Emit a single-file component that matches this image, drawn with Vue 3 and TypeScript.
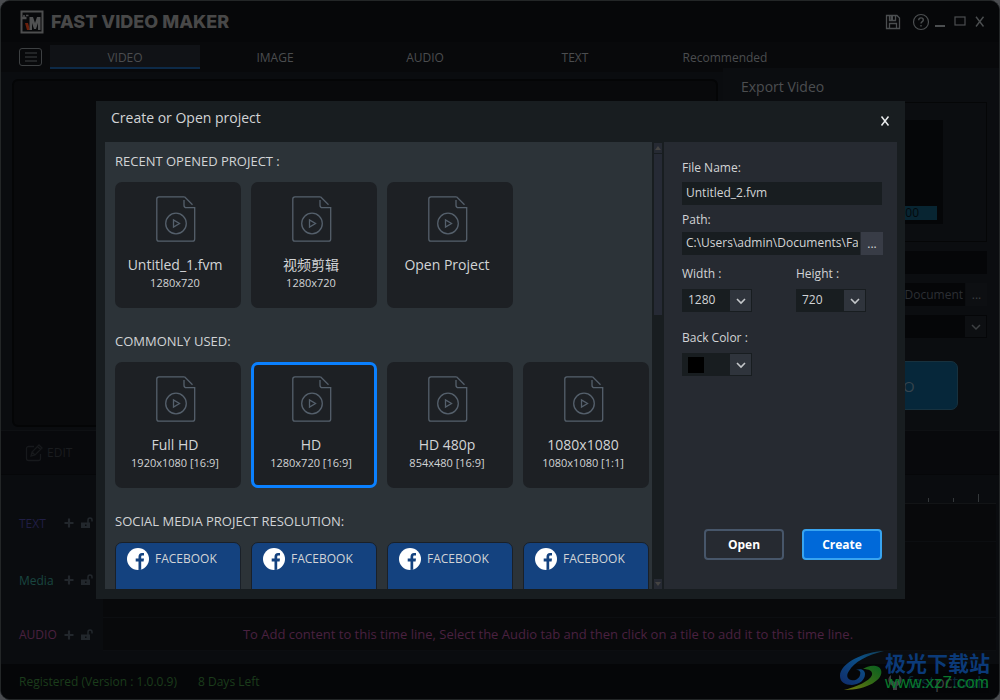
<script setup lang="ts">
import { ref } from 'vue'

interface Project {
  title: string
  size?: string
}

const tabs = ['VIDEO', 'IMAGE', 'AUDIO', 'TEXT', 'Recommended']
const activeTab = ref('VIDEO')

const recent: Project[] = [
  { title: 'Untitled_1.fvm', size: '1280x720' },
  { title: '视频剪辑', size: '1280x720' },
  { title: 'Open Project' },
]
const common: Project[] = [
  { title: 'Full HD', size: '1920x1080 [16:9]' },
  { title: 'HD', size: '1280x720 [16:9]' },
  { title: 'HD 480p', size: '854x480 [16:9]' },
  { title: '1080x1080', size: '1080x1080 [1:1]' },
]
const sections = [
  { heading: 'RECENT OPENED PROJECT :', items: recent },
  { heading: 'COMMONLY USED:', items: common },
]
const selected = ref('HD')
const social = ['FACEBOOK', 'FACEBOOK', 'FACEBOOK', 'FACEBOOK']

const tracks = [
  { name: 'TEXT', kind: 'text', hint: '' },
  { name: 'Media', kind: 'media', hint: '' },
  {
    name: 'AUDIO',
    kind: 'audio',
    hint: 'To Add content to this time line, Select the Audio tab and then click on a tile to add it to this time line.',
  },
]
const ticks = [false, false, true]

const fileName = ref('Untitled_2.fvm')
const path = ref('C:\\Users\\admin\\Documents\\FastVideoMaker')
const width = ref('1280')
const height = ref('720')
</script>

<template>
  <div class="window">
    <header class="titlebar">
      <svg class="logo" viewBox="0 0 24 24" width="24" height="24">
        <rect x="1.5" y="1.5" width="21" height="21" fill="#08090b" stroke="#4d4e4f" stroke-width="2" />
        <path d="M2 8h4.500" stroke="#4d4e4f" stroke-width="2.500" />
        <path d="M6 5.500h2.500M4 7v-2" stroke="#4d4e4f" stroke-width="1.500" fill="none" />
        <path d="M5 13h3l2 7H7z" fill="#6a200c" />
        <path d="M9.500 20V7H13l2 6 2-6h3.500v13H18v-7l-2 6h-2l-2-6v7z" fill="#505152" />
      </svg>
      <h1>FAST VIDEO MAKER</h1>
      <div class="window-tools">
        <button class="bare" aria-label="Save">
          <svg viewBox="0 0 16 16" width="16" height="16" fill="none" stroke="#4b4e50" stroke-width="1.300">
            <path d="M1.500 1.500h10.500l2.500 2.500v10.500h-13z" />
            <path d="M4.500 14.500v-5h7v5" />
            <path d="M4.500 1.500v5h6v-5" />
            <path d="M5.500 2h2.500v4H5.500z" fill="#4b4e50" stroke="none" />
          </svg>
        </button>
        <button class="bare" aria-label="Help">
          <svg viewBox="0 0 18 18" width="18" height="18" fill="none" stroke="#4b4e50" stroke-width="1.200">
            <circle cx="9" cy="9" r="7.500" />
            <path d="M6.700 7.200c0-1.500 1-2.300 2.300-2.300s2.300.8 2.300 2c0 1.700-2.300 1.800-2.300 3.700M9 12v1.600" stroke-width="1.400" />
          </svg>
        </button>
        <button class="bare" aria-label="Minimize">
          <svg viewBox="0 0 12 12" width="12" height="12"><path d="M1 10h10" stroke="#4b4e50" stroke-width="2" /></svg>
        </button>
        <button class="bare" aria-label="Maximize">
          <svg viewBox="0 0 12 12" width="12" height="12"><rect x="1" y="1" width="10" height="8" fill="none" stroke="#4b4e50" stroke-width="1.200" /></svg>
        </button>
        <button class="bare" aria-label="Close">
          <svg viewBox="0 0 12 12" width="12" height="12"><path d="M2 .8l7.500 9.700M9.500 .8L2 10.500" stroke="#4b4e50" stroke-width="1.400" /></svg>
        </button>
      </div>
    </header>

    <nav class="tabs">
      <button class="menu" aria-label="Menu">
        <svg viewBox="0 0 12 10" width="12" height="10"><path d="M0 1h12M0 5h12M0 9h12" stroke="#3d4042" stroke-width="1" /></svg>
      </button>
      <button
        v-for="tab in tabs"
        :key="tab"
        class="tab"
        :class="{ active: tab === activeTab }"
        @click="activeTab = tab"
      >
        {{ tab }}
      </button>
    </nav>

    <main class="workspace">
      <div class="preview"></div>
      <section class="export">
        <h2>Export Video</h2>
        <div class="export-preview">
          <div class="screen"><span class="timer">00:00:00</span></div>
        </div>
        <input class="dark-input" type="text" aria-label="Export name" />
        <div class="export-path">
          <input class="dark-input path-end" type="text" aria-label="Export folder" value="C:\Users\admin\Document" />
          <button class="dim-more" aria-label="Browse export folder">...</button>
        </div>
        <div class="export-format">
          <select aria-label="Export format"><option></option></select>
          <span class="dim-arrow">
            <svg viewBox="0 0 12 8" width="12" height="8"><path d="M2 2l4 4 4-4" fill="none" stroke="#3d4043" stroke-width="1.500" /></svg>
          </span>
        </div>
        <button class="export-button">EXPORT VIDEO</button>
      </section>
    </main>

    <div class="edit-bar">
      <button class="bare edit">
        <svg viewBox="0 0 18 18" width="18" height="18" fill="none" stroke="#17191c" stroke-width="1.300">
          <path d="M9 2.500H3.500a2 2 0 0 0-2 2v10a2 2 0 0 0 2 2h10a2 2 0 0 0 2-2V10" />
          <path d="M6 12l1-4 7-7 3 3-7 7zM12.500 2.500l3 3M7 8l3 3" />
        </svg>
        EDIT
      </button>
    </div>

    <section class="timeline">
      <div class="ruler">
        <span v-for="(long, i) in ticks" :key="i" class="tick" :class="{ long }"></span>
      </div>
      <div v-for="track in tracks" :key="track.kind" class="track" :class="track.kind">
        <span class="track-name">{{ track.name }}</span>
        <button class="bare" :aria-label="'Add ' + track.name">
          <svg viewBox="0 0 10 10" width="10" height="10"><path d="M5 .5v9M.5 5h9" stroke="#22272c" stroke-width="2.200" /></svg>
        </button>
        <button class="bare" :aria-label="'Lock ' + track.name">
          <svg viewBox="0 0 12 12" width="12" height="12">
            <path d="M0 5.500h9V11H0z" fill="#22272c" />
            <path d="M7 6V3a2 2 0 0 1 4 0v1.500" fill="none" stroke="#22272c" stroke-width="1.500" />
            <path d="M4 7.500h1.500v1.500H4z" fill="#0a0c0f" />
          </svg>
        </button>
        <div class="lane">{{ track.hint }}</div>
      </div>
    </section>

    <footer class="status">
      <span>Registered (Version : 1.0.0.9)</span>
      <span>8 Days Left</span>
    </footer>

    <div class="overlay">
      <div class="dialog" role="dialog" aria-labelledby="dialog-title">
        <header class="dialog-head">
          <h2 id="dialog-title">Create or Open project</h2>
          <button class="bare" aria-label="Close dialog">
            <svg viewBox="0 0 12 12" width="12" height="12"><path d="M2.500 1.500l7 9M9.500 1.500l-7 9" stroke="#e8eaeb" stroke-width="1.500" /></svg>
          </button>
        </header>
        <div class="dialog-body">
          <div class="projects">
            <section v-for="section in sections" :key="section.heading" class="group">
              <h3>{{ section.heading }}</h3>
              <div class="cards">
                <button
                  v-for="item in section.items"
                  :key="item.title"
                  class="card"
                  :class="{ selected: item.title === selected }"
                  @click="selected = item.title"
                >
                  <svg viewBox="0 0 42 46" width="42" height="46" fill="none" stroke="#55606c" stroke-width="1.300">
                    <path d="M30.500 .8H5A2.200 2.200 0 0 0 2.800 3v40A2.200 2.200 0 0 0 5 45.200h33.500a2.200 2.200 0 0 0 2.200-2.200V11.700h-8.200a2.500 2.500 0 0 1-2.500-2.500V4" />
                    <path d="M30.500 .8l8 8" />
                    <circle cx="22" cy="27.500" r="10.300" />
                    <path d="M19.500 24v7l6-3.500z" />
                  </svg>
                  <span class="card-title">{{ item.title }}</span>
                  <span class="card-size">{{ item.size }}</span>
                </button>
              </div>
            </section>
            <section class="group">
              <h3>SOCIAL MEDIA PROJECT RESOLUTION:</h3>
              <div class="cards">
                <button v-for="(name, i) in social" :key="i" class="card social">
                  <svg viewBox="0 0 22 22" width="22" height="22">
                    <circle cx="11" cy="11" r="11" fill="#fff" />
                    <path d="M11.500 22v-8.500H8.700v-3h2.800V8.700c0-2.500 1.300-3.800 3.500-3.800h2v2.600h-1.500c-.9 0-1.300.5-1.300 1.300v1.700H17l-.4 3h-2.400v8.200z" fill="#14427f" />
                  </svg>
                  {{ name }}
                </button>
              </div>
            </section>
          </div>

          <div class="scrollbar">
            <span class="scroll-cap"><svg viewBox="0 0 6 4" width="6" height="4"><path d="M0 4l3-4 3 4z" fill="#454442" /></svg></span>
            <span class="scroll-thumb"></span>
            <span class="scroll-cap last"><svg viewBox="0 0 6 4" width="6" height="4"><path d="M0 0h6L3 4z" fill="#454442" /></svg></span>
          </div>

          <form class="settings" @submit.prevent>
            <div class="field name-field">
              <label for="file-name">File Name:</label>
              <input id="file-name" v-model="fileName" type="text" />
            </div>
            <div class="field path-field">
              <label for="path">Path:</label>
              <div class="path-row">
                <input id="path" v-model="path" type="text" />
                <button type="button" class="more" aria-label="Browse">...</button>
              </div>
            </div>
            <div class="sizes">
              <div class="field">
                <label for="width">Width :</label>
                <div class="select">
                  <select id="width" v-model="width"><option>1280</option></select>
                  <span class="arrow"><svg viewBox="0 0 12 8" width="12" height="8"><path d="M2 2l4 4 4-4" fill="none" stroke="#c4c7ca" stroke-width="1.600" /></svg></span>
                </div>
              </div>
              <div class="field">
                <label for="height">Height :</label>
                <div class="select">
                  <select id="height" v-model="height"><option>720</option></select>
                  <span class="arrow"><svg viewBox="0 0 12 8" width="12" height="8"><path d="M2 2l4 4 4-4" fill="none" stroke="#c4c7ca" stroke-width="1.600" /></svg></span>
                </div>
              </div>
            </div>
            <div class="field color-field">
              <label for="back-color">Back Color :</label>
              <div class="select">
                <span class="swatch"></span>
                <select id="back-color"><option value="#000000" label=" "></option></select>
                <span class="arrow"><svg viewBox="0 0 12 8" width="12" height="8"><path d="M2 2l4 4 4-4" fill="none" stroke="#c4c7ca" stroke-width="1.600" /></svg></span>
              </div>
            </div>
            <div class="actions">
              <button type="button">Open</button>
              <button type="submit" class="primary">Create</button>
            </div>
          </form>
        </div>
      </div>
    </div>

    <div class="watermark">
      <svg viewBox="0 0 46 42" width="46" height="42">
        <defs>
          <linearGradient id="wm-blue" x1="0" y1="1" x2="1" y2="0">
            <stop offset="0" stop-color="#102a68" />
            <stop offset="0.600" stop-color="#0b5088" />
            <stop offset="1" stop-color="#123c50" />
          </linearGradient>
          <linearGradient id="wm-green" x1="0" y1="1" x2="1" y2="0">
            <stop offset="0" stop-color="#777a0c" />
            <stop offset="0.500" stop-color="#356a16" />
            <stop offset="1" stop-color="#086020" />
          </linearGradient>
        </defs>
        <path d="M45 1C24 2 1 13 1 26c0 6 5 9 12 9 8-1 13-5 13-11 0-4-4-6-9-4 4 0 5 2 4 5-1 4-5 6-9 5-4-1-5-5-2-9C15 12 28 5 45 1z" fill="url(#wm-blue)" />
        <path d="M24 19c5-4 16-5 18 1 3 9-13 20-37 20 12-3 26-9 28-15 1-4-3-6-9-6z" fill="url(#wm-green)" />
      </svg>
      <div class="mark-text">
        <span class="mark-name">极光下载站</span>
        <span class="mark-under">
          <svg viewBox="0 0 14 16" width="14" height="16"><path d="M3 1v5l4 2 4-2V1a6 6 0 0 1 0 10l-2 1v4H5v-4l-2-1A6 6 0 0 1 3 1z" fill="#55585b" /></svg>
          <span>fast<b>pc</b>tools</span>
        </span>
        <span class="mark-site">www.xz7.com</span>
      </div>
    </div>
  </div>
</template>

<style>
body {
  margin: 0;
  background: #4a4c50;
}
</style>

<style scoped>
.window {
  position: relative;
  box-sizing: border-box;
  min-height: 100vh;
  display: flex;
  flex-direction: column;
  overflow: hidden;
  border: 1px solid #232627;
  border-radius: 10px;
  background: #0a0c0f;
  font-family: "Open Sans", "Noto Sans", "Noto Sans CJK SC", sans-serif;
  font-size: 12px;
  color: #d2d4d6;
}
.window *,
.window *::before {
  box-sizing: border-box;
}
h1, h2, h3 {
  margin: 0;
  font-weight: 400;
}
button, input, select {
  margin: 0;
  padding: 0;
  border: 0;
  border-radius: 0;
  font: inherit;
  color: inherit;
  background: none;
  outline: 0;
}
svg {
  display: block;
  flex: none;
}
.bare {
  display: flex;
  align-items: center;
}

.titlebar {
  display: flex;
  align-items: center;
  height: 41px;
  padding: 0 13px 0 19px;
  background: #060709;
}
h1 {
  margin-left: 7px;
  font-family: Inter, "Liberation Sans", sans-serif;
  font-size: 18px;
  font-weight: 800;
  color: #484848;
}
.window-tools {
  display: flex;
  align-items: center;
  gap: 8px;
  margin-left: auto;
}
.window-tools .bare:nth-child(2) {
  margin: 0 -4px 0 3px;
}
.tabs {
  display: flex;
  align-items: stretch;
  height: 30px;
  padding: 3px 0 3px 18px;
  background: #08090b;
}
.menu {
  display: grid;
  place-items: center;
  width: 23px;
  height: 18px;
  margin: 3px 8px 0 0;
  border: 1px solid #3d4042;
  border-radius: 3px;
}
.tab {
  width: 150px;
  padding-top: 2px;
  border-bottom: 2px solid transparent;
  color: #4b4d4f;
}
.tab.active {
  background: #101216;
  border-color: #0d2a48;
}

.workspace {
  display: flex;
  flex: 1;
}
.preview {
  flex: 1;
  margin: 7px 5px 3px 11px;
  border: 2px solid #040506;
  border-radius: 6px;
  background: #08090b;
}
.export {
  display: flex;
  flex-direction: column;
  width: 276px;
  margin-top: -4px;
  padding: 9px 12px 0 18px;
  background: #0b0d10;
}
.export h2 {
  margin-bottom: 5px;
  font-size: 14px;
  line-height: 20px;
  color: #4c4e50;
}
.export-preview {
  height: 140px;
  padding: 17px 43px 17px 0;
  border: 1px solid #050607;
}
.screen {
  display: flex;
  align-items: flex-end;
  height: 104px;
  padding: 0 6px 4px 40px;
  background: #050608;
}
.timer {
  flex: 1;
  padding-right: 18px;
  text-align: right;
  line-height: 14px;
  color: #04090c;
  background: #082532;
}
.dark-input {
  width: 100%;
  min-width: 0;
  height: 23px;
  margin-top: 9px;
  background: #050608;
}
.export-path {
  display: flex;
  gap: 1px;
}
.path-end {
  padding-right: 2px;
  text-align: right;
  color: #2c2f34;
}
.dim-more {
  width: 23px;
  height: 23px;
  margin-top: 9px;
  color: #3c3f42;
  background: #0d0f12;
}
.export-format {
  display: flex;
  height: 23px;
  margin-top: 9px;
  border: 1px solid #050608;
  background: #050608;
}
.export-format select {
  flex: 1;
  appearance: none;
}
.dim-arrow {
  display: grid;
  place-items: center;
  width: 21px;
  background: #0d0f12;
}
.export-button {
  width: 190px;
  height: 49px;
  margin: 23px 0 0 27px;
  border: 1px solid #17313e;
  border-radius: 7px;
  font-size: 15px;
  color: #36444d;
  background: #06273a;
}

.edit-bar {
  display: flex;
  height: 45px;
  padding-left: 24px;
  border-top: 1px solid #0e1013;
  border-bottom: 1px solid #060709;
  background: #08090c;
}
.edit {
  gap: 4px;
  color: #1a1c1f;
}
.timeline {
  padding-bottom: 13px;
}
.ruler {
  display: flex;
  align-items: flex-end;
  justify-content: flex-end;
  gap: 24px;
  height: 29px;
  margin: 0 3px 0 102px;
  padding: 0 17px 1px 0;
  border-bottom: 1px solid #121416;
}
.tick {
  width: 1px;
  height: 4px;
  background: #34383a;
}
.tick.long {
  height: 8px;
}
.track {
  display: flex;
  align-items: center;
  height: 38px;
  padding: 0 3px 0 18px;
}
.track.media {
  height: 76px;
}
.track.audio {
  height: 33px;
}
.track-name {
  width: 45px;
}
.track .bare {
  width: 17px;
}
.lane {
  display: flex;
  align-items: center;
  justify-content: center;
  flex: 1;
  height: 100%;
  margin-left: 5px;
  padding-right: 3px;
  border-bottom: 1px solid #0c0e11;
  background: #08090b;
  font-size: 13px;
}
.text { color: #201e44; }
.media { color: #194640; }
.audio { color: #4a2140; }
.status {
  display: flex;
  align-items: center;
  gap: 21px;
  height: 35px;
  padding-left: 18px;
  background: #050608;
  color: #1b3c1b;
}

.overlay {
  position: absolute;
  inset: 0;
  display: flex;
  padding: 100px 94px 100px 95px;
}
.dialog {
  display: flex;
  flex: 1;
  flex-direction: column;
  min-width: 0;
  padding: 0 8px 10px 9px;
  background: #181d20;
}
.dialog-head {
  display: flex;
  justify-content: space-between;
  height: 41px;
  padding: 7px 6px 0;
}
.dialog-head h2 {
  font-size: 14px;
  line-height: 20px;
}
.dialog-head .bare {
  height: 26px;
}
.dialog-body {
  display: flex;
  flex: 1;
  min-height: 0;
}
.projects {
  flex: 1;
  min-width: 0;
  height: 447px;
  padding-left: 10px;
  overflow: hidden;
  background: #2c3338;
}
.group {
  margin-bottom: 14px;
}
h3 {
  padding-bottom: 2px;
  font-size: 13px;
  line-height: 38px;
}
.cards {
  display: grid;
  grid-template-columns: repeat(auto-fill, 126px);
  gap: 10px;
}
.card {
  display: flex;
  flex-direction: column;
  align-items: center;
  height: 126px;
  padding: 11px 3px 0 0;
  border: 3px solid transparent;
  border-radius: 7px;
  background: #1d2024 border-box;
}
.card.selected {
  border-color: #0a80ff;
}
.card:not(.social) {
  padding-right: 6px;
}
.card-title {
  margin-top: 12px;
  font-size: 14px;
  line-height: 22px;
}
.card-size {
  font-size: 11px;
  line-height: 14px;
}
.card.social {
  flex-direction: row;
  align-items: flex-start;
  gap: 6px;
  padding: 5px 0 0 11px;
  border: 1px solid #1a2028;
  line-height: 22px;
  background: #14427f;
}
.scrollbar {
  display: flex;
  flex-direction: column;
  gap: 1px;
  width: 12px;
  padding: 1px 2px 0;
}
.scroll-cap {
  display: grid;
  place-items: center;
  height: 10px;
  background: #262a33;
}
.scroll-thumb {
  height: 161px;
  background: #262a35;
}
.last {
  margin-top: auto;
}

.settings {
  display: flex;
  flex-direction: column;
  width: 233px;
  padding: 16px 15px 29px 18px;
  background: #262a31;
}
.field {
  display: flex;
  flex-direction: column;
  gap: 4px;
}
label {
  line-height: 20px;
}
.settings input {
  width: 100%;
  min-width: 0;
  height: 23px;
  padding: 0 2px 3px 4px;
  background: #181d20;
}
.path-field {
  margin-top: 5px;
  gap: 2px;
}
.path-row {
  display: flex;
  gap: 1px;
  margin-right: -1px;
}
.more {
  flex: none;
  width: 22px;
  height: 23px;
  background: #383c46;
}
.sizes {
  display: flex;
  gap: 44px;
  margin-top: 9px;
}
.sizes .field,
.color-field {
  gap: 5px;
}
.color-field {
  margin-top: 16px;
}
.select {
  display: flex;
  align-items: center;
  width: 70px;
  height: 23px;
  border: 1px solid #181d20;
  background: #181d20;
}
.select select {
  flex: 1;
  min-width: 0;
  height: 21px;
  padding: 0 0 2px 5px;
  appearance: none;
}
.swatch {
  width: 16px;
  height: 16px;
  margin-left: 5px;
  background: #000;
}
.arrow {
  display: grid;
  place-items: center;
  width: 21px;
  height: 21px;
  background: #2f343c;
}
.actions {
  display: flex;
  justify-content: flex-end;
  gap: 18px;
  margin-top: auto;
}
.actions button {
  width: 80px;
  height: 31px;
  border: 2px solid #47566a;
  border-radius: 4px;
  font-weight: 700;
  color: #fff;
}
.actions .primary {
  border-color: #38a4f0;
  background: #0069d9;
}

.watermark {
  position: absolute;
  right: 6px;
  bottom: 7px;
  display: flex;
}
.mark-text {
  position: relative;
  display: flex;
  flex-direction: column;
  width: 108px;
}
.mark-name {
  font-family: "Noto Sans CJK SC", sans-serif;
  font-size: 21px;
  font-weight: 700;
  line-height: 24px;
  color: #0b3a78;
}
.mark-site {
  position: relative;
  font-family: "Liberation Sans", sans-serif;
  font-size: 17px;
  line-height: 18px;
  color: #087a2c;
}
.mark-under {
  position: absolute;
  right: 4px;
  bottom: 0;
  display: flex;
  align-items: center;
  gap: 5px;
  font-size: 16px;
  line-height: 20px;
  color: #0c3a50;
  opacity: 0.7;
}
.mark-under b {
  font-weight: 400;
  color: #55585b;
}
</style>
